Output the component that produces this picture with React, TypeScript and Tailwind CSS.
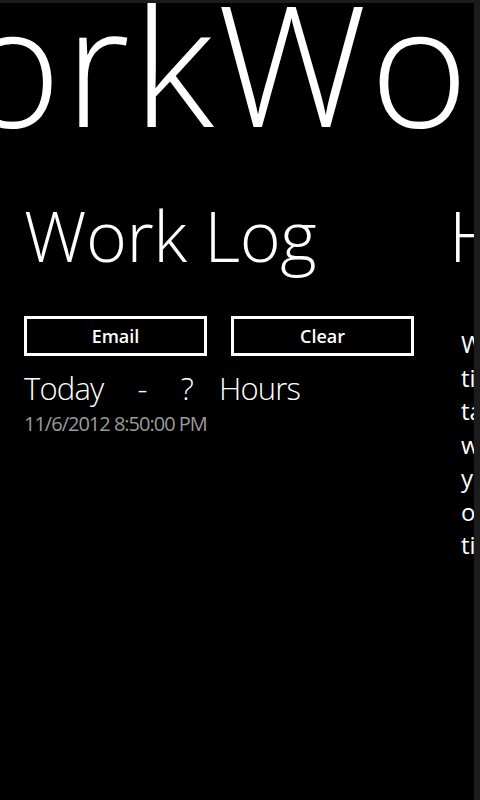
export default function App() {
  const font = { fontFamily: '"Open Sans", "Noto Sans", sans-serif' };
  return (
    <div className="h-[800px] w-[480px] bg-[#1c1c1c] pt-[3px]" style={font}>
      <div className="relative h-[797px] w-[474px] overflow-hidden bg-black text-white">
        <div className="-ml-[190px] -mt-[16px] whitespace-nowrap text-[168px] font-light leading-[150px] tracking-[3px]">
          WorkWorks
        </div>
        <div className="mt-[58px] flex">
          <div className="w-[452px] shrink-0 pl-[24px] pr-[38px]">
            <h1 className="text-[70px] font-light leading-[80px] tracking-[-0.5px]">Work Log</h1>
            <div className="mt-[41px] flex gap-[24px]">
              <button className="h-[40px] w-[183px] border-[3px] border-white text-[18px] font-semibold">
                Email
              </button>
              <button className="h-[40px] w-[183px] border-[3px] border-white text-[18px] font-semibold">
                Clear
              </button>
            </div>
            <div className="mt-[14px] flex items-baseline text-[31px] font-light leading-[36px] tracking-[-0.8px]">
              <span>Today</span>
              <span className="ml-[34px]">-</span>
              <span className="ml-[34px]">?</span>
              <span className="ml-[26px]">Hours</span>
            </div>
            <div className="mt-[6px] text-[20px] leading-[24px] tracking-[-1px] text-[#9a9a9a]">
              11/6/2012 8:50:00 PM
            </div>
          </div>
          <div className="-ml-[3px] w-[420px] shrink-0">
            <h1 className="text-[70px] font-light leading-[80px]">How</h1>
            <div className="mt-[52px] pl-[12px] text-[24px] leading-[33.5px]">
              <p>Work Works tracks the</p>
              <p>time you spend on a</p>
              <p>task. Tap the button</p>
              <p>when you start and</p>
              <p>you can email a log</p>
              <p>of all the recorded</p>
              <p>times.</p>
            </div>
          </div>
        </div>
      </div>
    </div>
  );
}
